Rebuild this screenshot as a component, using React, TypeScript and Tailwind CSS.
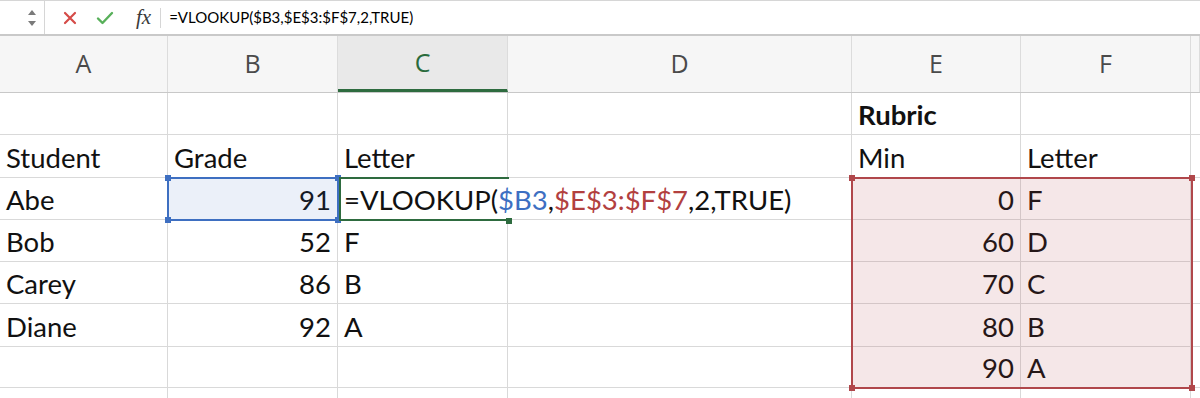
import React from 'react';

const font = { fontFamily: 'Lato, "Open Sans", sans-serif' };

type Cell = { text?: React.ReactNode; align?: 'left' | 'right'; bold?: boolean; noRight?: boolean };

const formula = (
  <>
    =VLOOKUP(<span className="text-[#3d6fc2]">$B3</span>,<span className="text-[#b2403f]">$E$3:$F$7</span>,2,TRUE)
  </>
);

const rows: { h: string; cells: Cell[] }[] = [
  { h: 'h-[42px]', cells: [{}, {}, {}, {}, { text: 'Rubric', bold: true }, {}, {}] },
  { h: 'h-[43px]', cells: [{ text: 'Student' }, { text: 'Grade' }, { text: 'Letter' }, {}, { text: 'Min' }, { text: 'Letter' }, {}] },
  { h: 'h-[42px]', cells: [{ text: 'Abe' }, { text: '91', align: 'right' }, { text: formula, noRight: true }, {}, { text: '0', align: 'right' }, { text: 'F' }, {}] },
  { h: 'h-[42px]', cells: [{ text: 'Bob' }, { text: '52', align: 'right' }, { text: 'F' }, {}, { text: '60', align: 'right' }, { text: 'D' }, {}] },
  { h: 'h-[42px]', cells: [{ text: 'Carey' }, { text: '86', align: 'right' }, { text: 'B' }, {}, { text: '70', align: 'right' }, { text: 'C' }, {}] },
  { h: 'h-[43px]', cells: [{ text: 'Diane' }, { text: '92', align: 'right' }, { text: 'A' }, {}, { text: '80', align: 'right' }, { text: 'B' }, {}] },
  { h: 'h-[41px]', cells: [{}, {}, {}, {}, { text: '90', align: 'right' }, { text: 'A' }, {}] },
  { h: 'h-[12px]', cells: [{}, {}, {}, {}, {}, {}, {}] },
];

const cols = ['A', 'B', 'C', 'D', 'E', 'F', ''];
const grid = 'grid grid-cols-[168px_170px_170px_344px_169px_170px_1fr]';

// little square drawn on the corners of a selected range
function Handle({ className }: { className: string }) {
  return <div className={`absolute w-[6px] h-[6px] ${className}`} />;
}

export default function App() {
  return (
    <div className="w-[1200px] h-[398px] overflow-hidden bg-white" style={font}>
      {/* Formula bar */}
      <div className="flex items-center h-[36px] border-t border-[#d6d6d6] border-b-2 border-b-[#c9c9c9] bg-white">
        <div className="w-[45px] h-full flex items-center justify-end pr-[7px] border-r border-[#d6d6d6]">
          <svg width="10" height="22" viewBox="0 0 10 22">
            <path d="M5 3 L9 8 L1 8 Z" fill="#7a7a7a" />
            <path d="M1 14 L9 14 L5 19 Z" fill="#7a7a7a" />
          </svg>
        </div>
        <div className="flex items-center gap-[19px] pl-[18px]">
          <svg width="14" height="14" viewBox="0 0 14 14">
            <path d="M2 2 L12 12 M12 2 L2 12" stroke="#d54b48" strokeWidth="2.2" strokeLinecap="round" />
          </svg>
          <svg width="18" height="14" viewBox="0 0 18 14">
            <path d="M2 7.5 L6.5 12 L16 2" stroke="#58b05a" strokeWidth="2.4" fill="none" strokeLinecap="round" strokeLinejoin="round" />
          </svg>
        </div>
        <span className="ml-[22px] italic text-[21px] text-[#3a3a3a] leading-none" style={{ fontFamily: '"Liberation Serif", serif' }}>
          fx
        </span>
        <div className="ml-[9px] w-px h-[20px] bg-[#d6d6d6]" />
        <span className="ml-[8px] text-[15px] text-black">=VLOOKUP($B3,$E$3:$F$7,2,TRUE)</span>
      </div>

      {/* Column headers */}
      <div className={`${grid} h-[57px] bg-[#f6f6f6] border-b border-[#c8c8c8]`}>
        {cols.map((c) => (
          <div
            key={c || 'g'}
            className={`flex items-center justify-center border-r border-[#dcdcdc] text-[25px] ${
              c === 'C' ? 'bg-[#e9e9e9] text-[#2a6b3c] border-b-[3px] border-b-[#2e6b3f]' : 'text-[#4a4a4a]'
            }`}
            style={{ fontFamily: '"Open Sans", sans-serif' }}
          >
            {c}
          </div>
        ))}
      </div>

      {/* Cells */}
      <div className="relative">
        {rows.map((r, ri) => (
          <div key={ri} className={`${grid} ${r.h}`}>
            {r.cells.map((c, ci) => (
              <div
                key={ci}
                className={`flex items-end pb-[6px] px-[6px] border-b border-[#d9d9d9] whitespace-nowrap text-[27.5px] leading-none text-[#111] ${
                  c.noRight ? 'border-r border-r-transparent' : 'border-r border-r-[#d9d9d9]'
                } ${c.align === 'right' ? 'justify-end' : 'justify-start'} ${c.bold ? 'font-bold' : ''}`}
              >
                {c.text}
              </div>
            ))}
          </div>
        ))}

        {/* B3 selection */}
        <div className="absolute left-[167px] top-[84px] w-[172px] h-[44px] border-2 border-[#3e6fc1] bg-[#3e6fc1]/10">
          <Handle className="-left-[4px] -top-[4px] bg-[#3e6fc1]" />
          <Handle className="-right-[4px] -top-[4px] bg-[#3e6fc1]" />
          <Handle className="-left-[4px] -bottom-[4px] bg-[#3e6fc1]" />
          <Handle className="-right-[4px] -bottom-[4px] bg-[#3e6fc1]" />
        </div>

        {/* C3 active cell */}
        <div className="absolute left-[339px] top-[84px] w-[170px] h-[44px] border-t-2 border-b-2 border-l-2 border-[#2e6b3f]">
          <Handle className="-right-[3px] -bottom-[5px] bg-[#2e6b3f]" />
        </div>

        {/* E3:F7 range */}
        <div className="absolute left-[851px] top-[84px] w-[342px] h-[212px] border-2 border-[#b0474b] bg-[#b0474b]/[0.13]">
          <Handle className="-left-[4px] -top-[4px] bg-[#b0474b]" />
          <Handle className="-right-[4px] -top-[4px] bg-[#b0474b]" />
          <Handle className="-left-[4px] -bottom-[4px] bg-[#b0474b]" />
          <Handle className="-right-[4px] -bottom-[4px] bg-[#b0474b]" />
        </div>
      </div>
    </div>
  );
}
